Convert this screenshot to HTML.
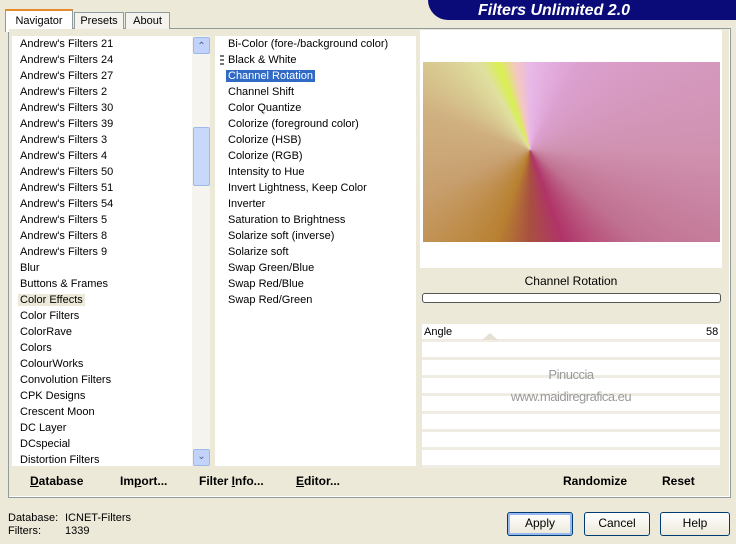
<!DOCTYPE html>
<html><head><style>
body{margin:0;width:736px;height:544px;background:#ece9d8;font-family:"Liberation Sans",sans-serif;font-size:11px;color:#000;position:relative;overflow:hidden}
.a{position:absolute}
.list div{height:16px;line-height:16px;padding-left:8px;white-space:nowrap}
.btn{position:absolute;border:1px solid #003c74;border-radius:3px;background:linear-gradient(#fff,#ece9d8);text-align:center;line-height:21px;font-size:12px}
.row{position:absolute;left:422px;width:298px;height:15px;background:#fff;border-bottom:3px solid #efede3}
.bb{position:absolute;top:474px;font-weight:bold;font-size:12px}
</style></head><body>
<div class="a" style="left:428px;top:0;width:308px;height:20px;background:#0a0a78;border-bottom-left-radius:20px"></div>
<div class="a" style="left:478px;top:1px;color:#fff;font-weight:bold;font-style:italic;font-size:16px;line-height:19px">Filters Unlimited 2.0</div>
<div class="a" style="left:8px;top:28px;width:721px;height:468px;border:1px solid #919b9c;background:#fff"></div>
<div class="a" style="left:5px;top:9px;width:66px;height:21px;background:#fff;border:1px solid #919b9c;border-bottom:none;border-top:2px solid #e68b2c;text-align:center;line-height:20px">Navigator</div>
<div class="a" style="left:74px;top:12px;width:48px;height:16px;background:#f4f3ee;border:1px solid #919b9c;text-align:center;line-height:16px">Presets</div>
<div class="a" style="left:125px;top:12px;width:43px;height:16px;background:#f4f3ee;border:1px solid #919b9c;text-align:center;line-height:16px">About</div>
<div class="a" style="left:9px;top:29px;width:720px;height:467px;background:#ece9d8"></div>
<div class="a list" style="left:12px;top:36px;width:180px;height:430px;background:#fff">
<div>Andrew's Filters 21</div><div>Andrew's Filters 24</div><div>Andrew's Filters 27</div><div>Andrew's Filters 2</div><div>Andrew's Filters 30</div><div>Andrew's Filters 39</div><div>Andrew's Filters 3</div><div>Andrew's Filters 4</div><div>Andrew's Filters 50</div><div>Andrew's Filters 51</div><div>Andrew's Filters 54</div><div>Andrew's Filters 5</div><div>Andrew's Filters 8</div><div>Andrew's Filters 9</div><div>Blur</div><div>Buttons &amp; Frames</div><div><span style="background:#ece9d8;padding:0 2px;margin-left:-2px">Color Effects</span></div><div>Color Filters</div><div>ColorRave</div><div>Colors</div><div>ColourWorks</div><div>Convolution Filters</div><div>CPK Designs</div><div>Crescent Moon</div><div>DC Layer</div><div>DCspecial</div><div>Distortion Filters</div></div>
<div class="a" style="left:192px;top:36px;width:18px;height:430px;background:#f5f4ee"></div>
<div class="a" style="left:193px;top:37px;width:15px;height:15px;background:#c1d3fb;border:1px solid #a0b8e8;border-radius:2px;color:#4d6185;font-size:10px;text-align:center;line-height:17px">&#8963;</div>
<div class="a" style="left:193px;top:127px;width:15px;height:57px;background:#c8d8fb;border:1px solid #a0b8e8;border-radius:2px"></div>
<div class="a" style="left:193px;top:449px;width:15px;height:15px;background:#c1d3fb;border:1px solid #a0b8e8;border-radius:2px;color:#4d6185;font-size:10px;text-align:center;line-height:13px">&#8964;</div>
<div class="a list" style="left:215px;top:36px;width:201px;height:430px;background:#fff">
<div style="padding-left:13px">Bi-Color (fore-/background color)</div><div style="padding-left:13px">Black &amp; White</div><div style="padding-left:11px"><span style="background:#316ac5;color:#fff;padding:0 2px">Channel Rotation</span></div><div style="padding-left:13px">Channel Shift</div><div style="padding-left:13px">Color Quantize</div><div style="padding-left:13px">Colorize (foreground color)</div><div style="padding-left:13px">Colorize (HSB)</div><div style="padding-left:13px">Colorize (RGB)</div><div style="padding-left:13px">Intensity to Hue</div><div style="padding-left:13px">Invert Lightness, Keep Color</div><div style="padding-left:13px">Inverter</div><div style="padding-left:13px">Saturation to Brightness</div><div style="padding-left:13px">Solarize soft (inverse)</div><div style="padding-left:13px">Solarize soft</div><div style="padding-left:13px">Swap Green/Blue</div><div style="padding-left:13px">Swap Red/Blue</div><div style="padding-left:13px">Swap Red/Green</div></div>
<div class="a" style="left:220px;top:55px;width:4px;height:10px;background:repeating-linear-gradient(#777 0 2px,transparent 2px 4px)"></div>
<div class="a" style="left:420px;top:30px;width:302px;height:238px;background:#fff"></div>
<div class="a" style="left:423px;top:62px;width:297px;height:180px;background:conic-gradient(from 0deg at 107px 88px,#e8b8e8 0deg,#dca0d0 30deg,#d092b0 90deg,#c07090 130deg,#b03468 160deg,#a85040 180deg,#b88030 200deg,#c8a070 250deg,#d0b080 290deg,#e0e0a0 330deg,#d8f050 340deg,#f4c8c0 350deg,#e8b8e8 360deg)"></div>
<div class="a" style="left:420px;top:268px;width:302px;height:56px;background:#ece9d8"></div>
<div class="a" style="left:420px;top:274px;width:302px;text-align:center;font-size:12px">Channel Rotation</div>
<div class="a" style="left:422px;top:293px;width:297px;height:8px;border:1px solid #555;border-radius:3px;background:#fff"></div>
<div class="row" style="top:324px"></div><div class="row" style="top:342px"></div><div class="row" style="top:360px"></div><div class="row" style="top:378px"></div><div class="row" style="top:396px"></div><div class="row" style="top:414px"></div><div class="row" style="top:432px"></div><div class="row" style="top:450px"></div>
<div class="a" style="left:424px;top:326px">Angle</div><div class="a" style="left:706px;top:326px">58</div>
<div class="a" style="left:482px;top:333px;width:0;height:0;border-left:8px solid transparent;border-right:8px solid transparent;border-bottom:7px solid #e4e1d4"></div>
<div class="a" style="left:420px;top:364px;width:302px;text-align:center;color:#999;font-size:13px;line-height:22px;letter-spacing:-0.5px">Pinuccia<br>www.maidiregrafica.eu</div>
<div class="bb" style="left:30px"><u>D</u>atabase</div>
<div class="bb" style="left:120px">Im<u>p</u>ort...</div>
<div class="bb" style="left:199px">Filter <u>I</u>nfo...</div>
<div class="bb" style="left:296px"><u>E</u>ditor...</div>
<div class="bb" style="left:563px">Randomize</div>
<div class="bb" style="left:662px">Reset</div>
<div class="a" style="left:8px;top:512px;line-height:13px">Database:<br>Filters:</div>
<div class="a" style="left:65px;top:512px;line-height:13px">ICNET-Filters<br>1339</div>
<div class="btn" style="left:507px;top:512px;width:64px;height:22px;box-shadow:inset 0 0 0 2px #9ab8f0">Apply</div>
<div class="btn" style="left:584px;top:512px;width:64px;height:22px">Cancel</div>
<div class="btn" style="left:660px;top:512px;width:68px;height:22px">Help</div>
</body></html>
